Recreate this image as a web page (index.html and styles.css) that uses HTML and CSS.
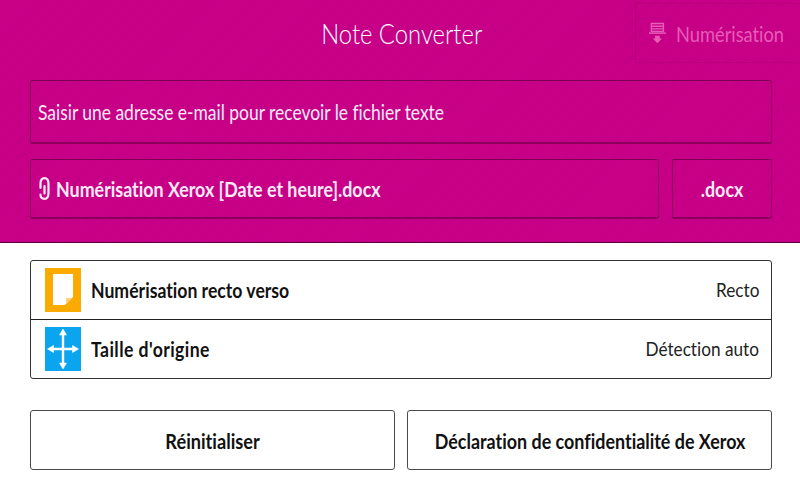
FILE: index.html
```html
<!DOCTYPE html>
<html lang="fr">

<head>
  <meta charset="UTF-8">
  <title>Note Converter</title>
  <link rel="stylesheet" href="styles.css">
</head>

<body>
  <header class="banner">
    <div class="title-row">
      <h1><span class="txt">Note Converter</span></h1>
      <div class="scan-tab">
        <svg class="scan-icon" viewBox="0 0 18 22" width="18" height="22">
          <path d="M2.500 0.800h13v8.400h-13zM2.500 3.800h13M2.500 6.500h13" fill="none" stroke="currentColor" stroke-width="1.400" />
          <path d="M0 10.300h18v1.600H0z" fill="currentColor" />
          <path d="M6.500 14h5v3h2.500L9 22 4 17h2.500z" fill="currentColor" />
        </svg>
        <span class="txt">Numérisation</span>
      </div>
    </div>
    <div class="field email-field"><span class="txt">Saisir une adresse e-mail pour recevoir le fichier texte</span></div>
    <div class="file-row">
      <div class="field file-field">
        <svg class="clip-icon" viewBox="0 0 11 23" width="11" height="23">
          <path d="M5.500 9v7.500M1.500 11V7C1.500 3 3 1.200 5.500 1.200S9.500 3 9.500 7v9c0 4-1.500 5.800-4 5.800-2.200 0-4-1.500-4-4.300" fill="none" stroke="currentColor" stroke-width="2.200" stroke-linecap="round" />
        </svg>
        <span class="txt">Numérisation Xerox [Date et heure].docx</span>
      </div>
      <div class="field ext-field"><span class="txt">.docx</span></div>
    </div>
  </header>

  <main class="content">
    <div class="option-list">
      <div class="option">
        <svg class="option-icon" viewBox="0 0 36 44" width="36" height="44">
          <rect width="36" height="44" fill="#fbab00" />
          <path d="M8 6h20v23l-8 8H8z" fill="#fff" />
          <path d="M21 36v-6h6z" fill="#fdd27a" />
        </svg>
        <span class="option-name"><span class="txt">Numérisation recto verso</span></span>
        <span class="option-value"><span class="txt">Recto</span></span>
      </div>
      <div class="option">
        <svg class="option-icon" viewBox="0 0 36 44" width="36" height="44">
          <rect width="36" height="44" fill="#0aa5ee" />
          <path d="M16.800 6h2.400v32h-2.400zM6 20.800h24v2.400H6z" fill="#fff" />
          <path d="M18 2l3.500 6h-7zM18 42l-3.500-6h7zM2.500 22l6-3.500v7zM33.500 22l-6 3.500v-7z" fill="#fff" stroke="#fff" stroke-width="0.600" stroke-linejoin="round" />
        </svg>
        <span class="option-name"><span class="txt wide">Taille d'origine</span></span>
        <span class="option-value"><span class="txt">Détection auto</span></span>
      </div>
    </div>
    <div class="actions">
      <button class="action"><span class="txt reset-label">Réinitialiser</span></button>
      <button class="action"><span class="txt">Déclaration de confidentialité de Xerox</span></button>
    </div>
  </main>
</body>

</html>
```

FILE: styles.css
```css
* {
  box-sizing: border-box;
  margin: 0;
  padding: 0;
  font-family: Lato, "Open Sans", sans-serif;
  font-variant-ligatures: none;
}

body {
  width: 800px;
  height: 480px;
  overflow: hidden;
  background-color: #ffffff;
  color: #111111;
}

/* the reference face is narrower than anything installed */
.txt {
  display: inline-block;
  white-space: nowrap;
  transform: scaleX(0.85);
  transform-origin: left center;
}

.wide {
  letter-spacing: 0.5px;
}

.banner {
  height: 243px;
  background-color: #c70087;
  background-image: repeating-linear-gradient(135deg, #cb008a 0, #cb008a 1px, #c30084 1px, #c30084 2px);
  border-bottom: 1px solid #5c0040;
  padding: 0 28px 0 30px;
}

.title-row {
  height: 80px;
  display: flex;
  justify-content: center;
  align-items: flex-start;
  position: relative;
}

h1 {
  font-size: 28px;
  font-weight: 300;
  color: #ffffff;
  margin-top: 16px;
  margin-left: 1px;
}

h1 .txt,
.ext-field .txt,
.action .txt {
  transform-origin: center;
}

.scan-tab {
  position: absolute;
  top: 3px;
  right: -28px;
  width: 165px;
  height: 60px;
  display: flex;
  align-items: center;
  gap: 10px;
  padding-left: 13px;
  color: #e65cb8;
  font-size: 21px;
  border: 1px solid #b50079;
  border-right: none;
}

.scan-tab .txt {
  transform: scaleX(0.87);
}

.field {
  display: flex;
  align-items: center;
  height: 64px;
  color: #fdeaf6;
  border: 1px solid #8a005c;
  border-top-color: #7c0052;
  border-bottom: 2px solid #8a005c;
  border-radius: 2px;
}

.email-field {
  padding-left: 7px;
  font-size: 21px;
}

.email-field .txt {
  transform: scaleX(0.83);
}

.file-row {
  display: flex;
  gap: 13px;
  margin-top: 15px;
}

.file-row .field {
  height: 60px;
  font-size: 21px;
  font-weight: 700;
}

.file-field {
  flex: 1;
  padding-left: 8px;
  gap: 6px;
}

.ext-field {
  width: 100px;
  justify-content: center;
}

.content {
  padding: 17px 28px 0 30px;
}

.option-list {
  border: 1px solid #333333;
  border-radius: 3px;
}

.option {
  height: 58px;
  display: flex;
  align-items: center;
  padding: 0 12px 0 14px;
  font-size: 21px;
}

.option + .option {
  height: 59px;
  border-top: 1px solid #222222;
}

.option-icon {
  margin-right: 10px;
}

.option-name {
  font-weight: 700;
  flex: 1;
  margin-bottom: 2px;
}

.option-name .txt {
  transform: scaleX(0.84);
}

.option-value {
  font-size: 20px;
  color: #222222;
  margin-bottom: 2px;
}

.option-value .txt {
  transform: scaleX(0.86);
  transform-origin: right center;
}

.actions {
  display: flex;
  gap: 12px;
  margin-top: 31px;
}

.action {
  flex: 1 1 0;
  min-width: 0;
  height: 60px;
  background-color: #ffffff;
  border: 1px solid #4a4a4a;
  border-radius: 3px;
  font-size: 21px;
  font-weight: 700;
  color: #111111;
}

.action .txt {
  transform: scaleX(0.853);
}

.action .reset-label {
  transform: scaleX(0.865);
}
```
